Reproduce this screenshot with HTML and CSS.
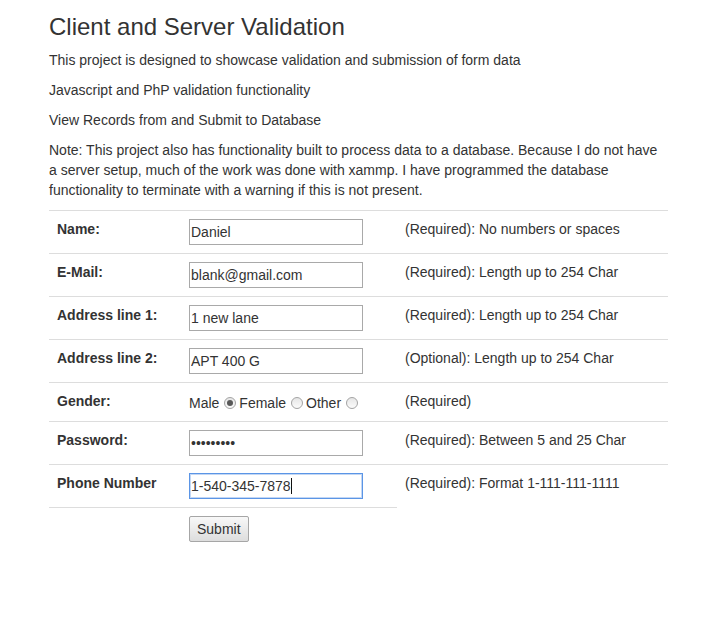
FILE: index.html
```html
<!DOCTYPE html>
<html>
<head>
<meta charset="utf-8">
<title>Client and Server Validation</title>
<link rel="stylesheet" href="styles.css">
</head>
<body>
<div class="container">
  <h1 class="title">Client and Server Validation</h1>
  <p>This project is designed to showcase validation and submission of form data</p>
  <p>Javascript and PhP validation functionality</p>
  <p>View Records from and Submit to Database</p>
  <p class="note">Note: This project also has functionality built to process data to a database. Because I do not have a server setup, much of the work was done with xammp. I have programmed the database functionality to terminate with a warning if this is not present.</p>
  <form class="form">
    <table class="table">
      <tr>
        <td class="c1"><b>Name:</b></td>
        <td class="c2"><input class="field" type="text" value="Daniel"></td>
        <td class="c3">(Required): No numbers or spaces</td>
      </tr>
      <tr>
        <td class="c1"><b>E-Mail:</b></td>
        <td class="c2"><input class="field" type="text" value="blank@gmail.com"></td>
        <td class="c3">(Required): Length up to 254 Char</td>
      </tr>
      <tr>
        <td class="c1"><b>Address line 1:</b></td>
        <td class="c2"><input class="field" type="text" value="1 new lane"></td>
        <td class="c3">(Required): Length up to 254 Char</td>
      </tr>
      <tr>
        <td class="c1"><b>Address line 2:</b></td>
        <td class="c2"><input class="field" type="text" value="APT 400 G"></td>
        <td class="c3">(Optional): Length up to 254 Char</td>
      </tr>
      <tr>
        <td class="c1"><b>Gender:</b></td>
        <td class="c2 gender">Male<input class="radio" type="radio" name="g" checked>Female<input class="radio" type="radio" name="g">Other<input class="radio" type="radio" name="g"></td>
        <td class="c3">(Required)</td>
      </tr>
      <tr>
        <td class="c1"><b>Password:</b></td>
        <td class="c2"><input class="field" type="text" value="•••••••••" aria-label="Password"></td>
        <td class="c3">(Required): Between 5 and 25 Char</td>
      </tr>
      <tr>
        <td class="c1"><b>Phone Number</b></td>
        <td class="c2"><span class="focus-wrap"><input class="field focused" type="text" value="1-540-345-7878"><span class="caret"></span></span></td>
        <td class="c3">(Required): Format 1-111-111-1111</td>
      </tr>
      <tr class="submit-row">
        <td class="c1"></td>
        <td class="c2"><button class="btn" type="button">Submit</button></td>
      </tr>
    </table>
  </form>
</div>
</body>
</html>
```
FILE: styles.css
```css
html, body {
  margin: 0;
  padding: 0;
  background: #fff;
}
body {
  font-family: "Liberation Sans", Arial, Helvetica, sans-serif;
  font-size: 14px;
  line-height: 20px;
  color: #333;
}
.container {
  width: 619px;
  margin-left: 49px;
}
.title {
  font-size: 24px;
  font-weight: normal;
  line-height: 1.1;
  margin: 14px 0 10px;
}
p {
  margin: 0 0 10px;
}
.note {
  padding-right: 8px;
}
.form {
  margin: 0;
}
.table {
  width: 619px;
  border-collapse: collapse;
  border-spacing: 0;
}
.table td {
  padding: 8px;
  border-top: 1px solid #ddd;
  vertical-align: top;
  line-height: 20px;
}
.c1 {
  width: 116px;
}
.c2 {
  width: 200px;
}
.table td.gender {
  padding-top: 10px;
}
.field {
  box-sizing: border-box;
  width: 174px;
  height: 26px;
  margin: 0;
  padding: 0 1px;
  border: 1px solid #a9a9a9;
  border-radius: 0;
  font-family: "Liberation Sans", Arial, sans-serif;
  font-size: 14px;
  color: #333;
  background: #fff;
  outline: none;
  vertical-align: top;
}
.field.focused {
  border-color: #5b95e6;
  box-shadow: 0 0 0 1px #c3d7f4 inset;
}
.focus-wrap {
  position: relative;
  display: inline-block;
  vertical-align: top;
}
.caret {
  position: absolute;
  left: 102px;
  top: 5px;
  width: 1px;
  height: 16px;
  background: #111;
}
.radio {
  -webkit-appearance: none;
  appearance: none;
  box-sizing: border-box;
  width: 12px;
  height: 12px;
  margin: 0 3px 0 5px;
  border: 1px solid #a4a4a4;
  border-radius: 50%;
  background: linear-gradient(#e6e6e6, #fbfbfb);
  vertical-align: -1px;
  position: relative;
}
.radio:checked::after {
  content: "";
  position: absolute;
  left: 2px;
  top: 2px;
  width: 6px;
  height: 6px;
  border-radius: 50%;
  background: #585858;
}
.btn {
  box-sizing: border-box;
  height: 26px;
  padding: 0 7px;
  margin: 0;
  border: 1px solid #a6a6a6;
  border-radius: 2px;
  background: linear-gradient(#f8f8f8, #dddddd);
  font-family: "Liberation Sans", Arial, sans-serif;
  font-size: 14px;
  color: #333;
  vertical-align: top;
}
```
